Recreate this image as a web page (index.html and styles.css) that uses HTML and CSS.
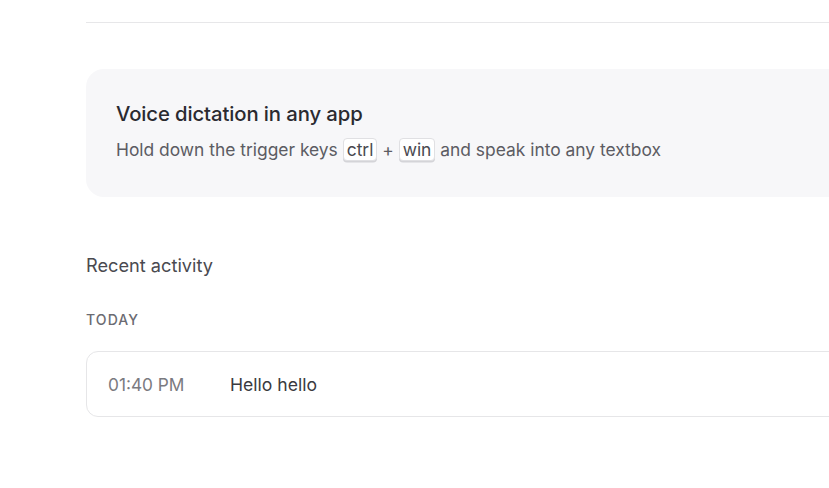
FILE: index.html
```html
<!DOCTYPE html>
<html>
<head>
<meta charset="utf-8">
<link rel="stylesheet" href="styles.css">
</head>
<body>
<main class="page">
  <div class="divider"></div>
  <section class="hero">
    <h2 class="hero-title">Voice dictation in any app</h2>
    <p class="hero-text">Hold down the trigger keys <span class="key">ctrl</span> + <span class="key">win</span> and speak into any textbox</p>
  </section>
  <h3 class="section-title">Recent activity</h3>
  <div class="day-label">TODAY</div>
  <div class="activity-row">
    <span class="time">01:40 PM</span>
    <span class="activity-text">Hello hello</span>
  </div>
</main>
</body>
</html>
```
FILE: styles.css
```css
html, body {
  margin: 0;
  padding: 0;
  background: #ffffff;
  overflow: hidden;
}
body {
  font-family: "Inter", "Noto Sans", sans-serif;
  color: #27272a;
}
.page {
  margin-left: 86px;
  width: 900px;
  padding-top: 22px;
}
.divider {
  height: 1px;
  background: #e7e7e9;
}
.hero {
  margin-top: 46px;
  background: #f7f7f9;
  border-radius: 18px;
  height: 128px;
  box-sizing: border-box;
  padding: 31px 30px 0;
}
.hero-title {
  margin: 0;
  font-size: 20.3px;
  font-weight: 500;
  line-height: 28px;
  color: #2a2a30;
  letter-spacing: -0.1px;
}
.hero-text {
  margin: 9px 0 0;
  font-size: 17.4px;
  line-height: 26px;
  color: #5c5c63;
}
.key {
  display: inline-block;
  border: 1px solid #e0e0e3;
  box-shadow: 0 1.5px 0 #d4d4d8;
  background: #ffffff;
  border-radius: 4px;
  padding: 0 3px;
  line-height: 21px;
  color: #4a4a50;
}
.section-title {
  margin: 56px 0 0;
  font-size: 18.2px;
  font-weight: 400;
  line-height: 24px;
  color: #4a4a50;
}
.day-label {
  margin-top: 33px;
  font-size: 14px;
  font-weight: 500;
  letter-spacing: 1.1px;
  line-height: 20px;
  color: #6b6b72;
}
.activity-row {
  margin-top: 21px;
  height: 66px;
  box-sizing: border-box;
  border: 1px solid #e6e6e8;
  border-radius: 12px;
  display: flex;
  align-items: center;
  padding-left: 21px;
}
.time {
  width: 122px;
  font-size: 17.3px;
  color: #7a7a80;
}
.activity-text {
  font-size: 17.6px;
  color: #3a3a40;
}
```
